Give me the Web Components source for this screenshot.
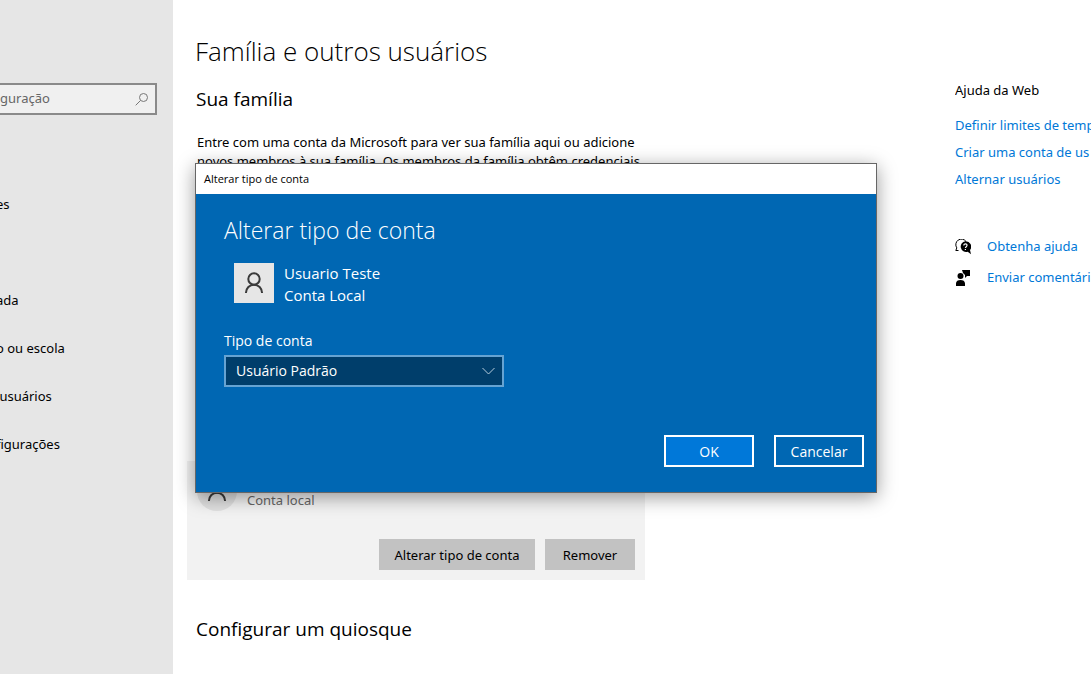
<!DOCTYPE html>
<html lang="pt-BR">
<head>
<meta charset="utf-8">
<title>Família e outros usuários</title>
<style>
html, body { margin: 0; height: 100%; }
body { font: 13px/19px "Noto Sans", "Open Sans", sans-serif; color: #000; background: #fff; overflow: hidden; }
</style>
</head>
<body>
<settings-app></settings-app>
<script>
function define(name, html) {
  const t = document.createElement('template');
  t.innerHTML = html;
  customElements.define(name, class extends HTMLElement {
    constructor() {
      super();
      this.attachShadow({ mode: 'open' }).append(t.content.cloneNode(true));
    }
  });
}

define('person-icon', `
<style>
:host { display: block; width: 20px; height: 22px; color: #3b3b3b; }
svg { display: block; width: 100%; height: 100%; }
</style>
<svg viewBox="0 0 20 22" fill="none" stroke="currentColor" stroke-width="2" aria-hidden="true">
<circle cx="10" cy="7" r="5.7"/><path d="M1.9 21c.2-4.800 3.600-8.300 8.100-8.300s7.900 3.500 8.100 8.300"/>
</svg>`);

define('flat-button', `
<style>
:host { display: block; }
button { box-sizing: border-box; width: 100%; height: 31px; border: 0; padding: 2px 0 0; margin: 0; font: inherit; color: #000; background: #c2c2c2; }
:host([kind]) button { height: 32px; padding: 0; border: 2px solid #fff; color: #fff; background: transparent; }
:host([kind=primary]) button { background: #0078d9; }
</style>
<button type="button"><slot></slot></button>`);

define('nav-item', `
<style>
:host { display: flex; align-items: center; height: 48px; }
a { color: inherit; text-decoration: none; white-space: pre; }
</style>
<a href="#"><slot></slot></a>`);

define('side-bar', `
<style>
:host { display: block; background: #e6e6e6; overflow: hidden; }
.search { display: flex; align-items: center; box-sizing: border-box; height: 32px; margin: 83px 16px 65px -2px; padding-right: 6px; border: 2px solid #8a8a8a; background: #f0f0f0; }
input { flex: 1; min-width: 0; border: 0; padding: 0 0 2px; background: none; font: inherit; outline: 0; }
input::placeholder { color: #666; opacity: 1; }
nav { margin-left: -4px; }
.gap { height: 48px; }
</style>
<div class="search"><input type="search" aria-label="Pesquisar" placeholder="guração">
<svg width="14" height="14" viewBox="0 0 14 14" fill="none" stroke="#777" aria-hidden="true"><circle cx="8.500" cy="5.500" r="4"/><path d="M5.500 8.500L.7 13.300"/></svg></div>
<nav>
<nav-item>es</nav-item><div class="gap"></div><nav-item>ada</nav-item><nav-item>o ou escola</nav-item><nav-item>&nbsp;usuários</nav-item><nav-item>figurações</nav-item>
</nav>`);

define('account-card', `
<style>
:host { display: block; box-sizing: border-box; width: 458px; padding: 10px; background: #f2f2f2; }
.who { display: flex; gap: 10px; height: 40px; }
.pic { width: 40px; height: 40px; border-radius: 50%; background: #e0e0e0; display: grid; place-items: center; }
.kind { padding-top: 20px; color: #666; }
.acts { display: flex; justify-content: flex-end; gap: 10px; margin-top: 28px; }
.a { width: 156px; } .b { width: 90px; }
</style>
<div class="who"><div class="pic"><person-icon></person-icon></div><span class="kind">Conta local</span></div>
<div class="acts"><flat-button class="a">Alterar tipo de conta</flat-button><flat-button class="b">Remover</flat-button></div>`);

define('family-page', `
<style>
:host { display: block; min-width: 0; padding: 32px 14px 0; }
h1 { margin: 0 8px; font-family: "Open Sans", sans-serif; font-size: 26px; line-height: 38px; font-weight: 300; }
h2 { margin: 0 9px; font-family: "Open Sans", sans-serif; font-size: 19px; line-height: 28px; font-weight: 400; }
.first { margin-top: 15px; }
p { margin: 20px 10px 0; }
account-card { margin: 290px 0 35px; }
</style>
<h1>Família e outros usuários</h1>
<h2 class="first">Sua família</h2>
<p>Entre com uma conta da Microsoft para ver sua família aqui ou adicione<br>novos membros à sua família. Os membros da família obtêm credenciais</p>
<account-card></account-card>
<h2>Configurar um quiosque</h2>`);

define('help-panel', `
<style>
:host { display: block; overflow: hidden; white-space: nowrap; padding-top: 81px; }
h2 { margin: 0 0 16px; font: inherit; }
a { display: block; color: #0078d7; text-decoration: none; }
.links { display: grid; gap: 8px; }
.tools { display: grid; gap: 12px; margin-top: 48px; }
.tools a { display: flex; align-items: center; gap: 16px; }
svg { flex: none; color: #000; }
</style>
<h2>Ajuda da Web</h2>
<div class="links"><a href="#">Definir limites de temp</a><a href="#">Criar uma conta de us</a><a href="#">Alternar usuários</a></div>
<div class="tools">
<a href="#"><svg width="16" height="16" viewBox="0 0 16 16" aria-hidden="true"><path d="M3.500 11.500H.8l1-2.600A5.100 5.100 0 1 1 11 2.500" fill="none" stroke="currentColor"/><path d="M10.300 2.300a5.400 5.400 0 1 0 2.400 10.500l3.300 2.500-1-4.300a5.400 5.400 0 0 0-4.700-8.700z" fill="currentColor"/><path d="M8.800 6.500c0-2.200 3.400-2.100 3.200 0-.1 1.200-1.600 1.200-1.600 2.600m0 .8v1.200" fill="none" stroke="#fff" stroke-width="1.200"/></svg>Obtenha ajuda</a>
<a href="#"><svg width="16" height="16" viewBox="0 0 16 16" fill="currentColor" aria-hidden="true"><circle cx="5.500" cy="6" r="3"/><path d="M1 16v-2.500C1 11 3 10 5.500 10S10 11 10 13.500V16zM7 0h8v6h-3l-2 2V5L8 3z"/></svg>Enviar comentári</a>
</div>`);

define('account-dialog', `
<style>
:host { display: block; box-sizing: border-box; border: 1px solid #666; background: #0067b3; color: #fff; font-family: "Open Sans", sans-serif; box-shadow: 0 4px 18px rgba(0,0,0,.4); }
header { height: 30px; padding-left: 8px; background: #fff; color: #000; font-size: 11px; line-height: 30px; }
.body { padding: 20px 12px 25px 28px; }
h1 { margin: 0; font-size: 23px; line-height: 32px; font-weight: 300; }
.user { display: flex; gap: 10px; margin: 16px 10px 24px; font-size: 15px; line-height: 22px; }
.pic { width: 40px; height: 40px; margin-top: 1px; background: #e6e6e6; display: grid; place-items: center; }
.field { font-size: 14px; line-height: 22px; }
label { display: block; margin-bottom: 3px; }
.box { position: relative; width: 280px; }
select { appearance: none; display: block; box-sizing: border-box; width: 100%; height: 32px; border: 2px solid #66a3d2; border-radius: 0; padding: 0 10px; background: #003e6b; color: #fff; font: inherit; }
.box svg { position: absolute; right: 9px; top: 12px; pointer-events: none; }
footer { display: flex; justify-content: flex-end; gap: 20px; margin-top: 48px; font-size: 14px; }
footer flat-button { width: 90px; }
</style>
<header>Alterar tipo de conta</header>
<div class="body">
<h1>Alterar tipo de conta</h1>
<div class="user"><div class="pic"><person-icon></person-icon></div><div>Usuario Teste<br>Conta Local</div></div>
<div class="field"><label for="kind">Tipo de conta</label>
<div class="box"><select id="kind"><option>Usuário Padrão</option></select><svg width="13" height="8" viewBox="0 0 13 8" fill="none" stroke="#b5cbdc" aria-hidden="true"><path d="M.5 1l6 6 6-6"/></svg></div></div>
<footer><flat-button kind="primary">OK</flat-button><flat-button kind="plain">Cancelar</flat-button></footer>
</div>`);

define('settings-app', `
<style>
:host { display: grid; grid-template-columns: 173px 1fr 136px; min-height: 100%; position: relative; }
account-dialog { position: absolute; left: 195px; top: 163px; width: 682px; }
</style>
<side-bar></side-bar><family-page></family-page><help-panel></help-panel>
<account-dialog role="dialog" aria-label="Alterar tipo de conta"></account-dialog>`);
</script>
</body>
</html>
